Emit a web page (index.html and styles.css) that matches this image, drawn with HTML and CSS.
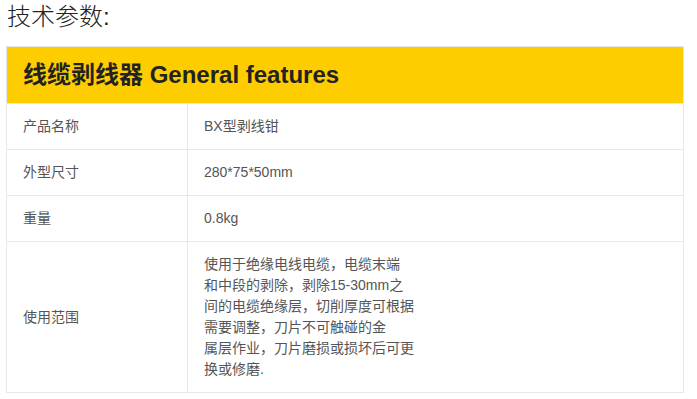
FILE: index.html
```html
<!DOCTYPE html>
<html lang="zh">
<head>
<meta charset="utf-8">
<link rel="stylesheet" href="styles.css">
</head>
<body>
<div class="page">
  <h2 class="title">技术参数:</h2>
  <table class="spec">
    <thead>
      <tr><th colspan="2" class="head">线缆剥线器 General features</th></tr>
    </thead>
    <tbody>
      <tr><td class="key">产品名称</td><td class="val">BX型剥线钳</td></tr>
      <tr><td class="key">外型尺寸</td><td class="val">280*75*50mm</td></tr>
      <tr><td class="key">重量</td><td class="val">0.8kg</td></tr>
      <tr><td class="key">使用范围</td><td class="val">使用于绝缘电线电缆，电缆末端<br>和中段的剥除，剥除15-30mm之<br>间的电缆绝缘层，切削厚度可根据<br>需要调整，刀片不可触碰的金<br>属层作业，刀片磨损或损坏后可更<br>换或修磨.</td></tr>
    </tbody>
  </table>
</div>
</body>
</html>
```

FILE: styles.css
```css
html, body {
  margin: 0;
  padding: 0;
  background: #fff;
}
.page {
  padding: 0 13px 0 6px;
  font-family: "Liberation Sans", "Noto Sans CJK SC", sans-serif;
}
.title {
  margin: 0;
  padding: 0 0 0 1px;
  height: 46px;
  font-size: 24px;
  line-height: 34px;
  font-weight: 300;
  color: #222;
}
.spec {
  width: 678px;
  border-collapse: collapse;
  border: 1px solid #e6e6e6;
  font-size: 14px;
  line-height: 21px;
  color: #555;
}
.head {
  background: #fdcd00;
  color: #222;
  text-align: left;
  font-size: 24px;
  line-height: 28px;
  font-weight: bold;
  height: 57px;
  padding: 0 16px;
  box-sizing: border-box;
  border: 1px solid #e6e6e6;
}
.spec td {
  border: 1px solid #e8e8e8;
  padding: 12px 16px;
  text-align: left;
  vertical-align: middle;
}
.key {
  width: 148px;
}
```
